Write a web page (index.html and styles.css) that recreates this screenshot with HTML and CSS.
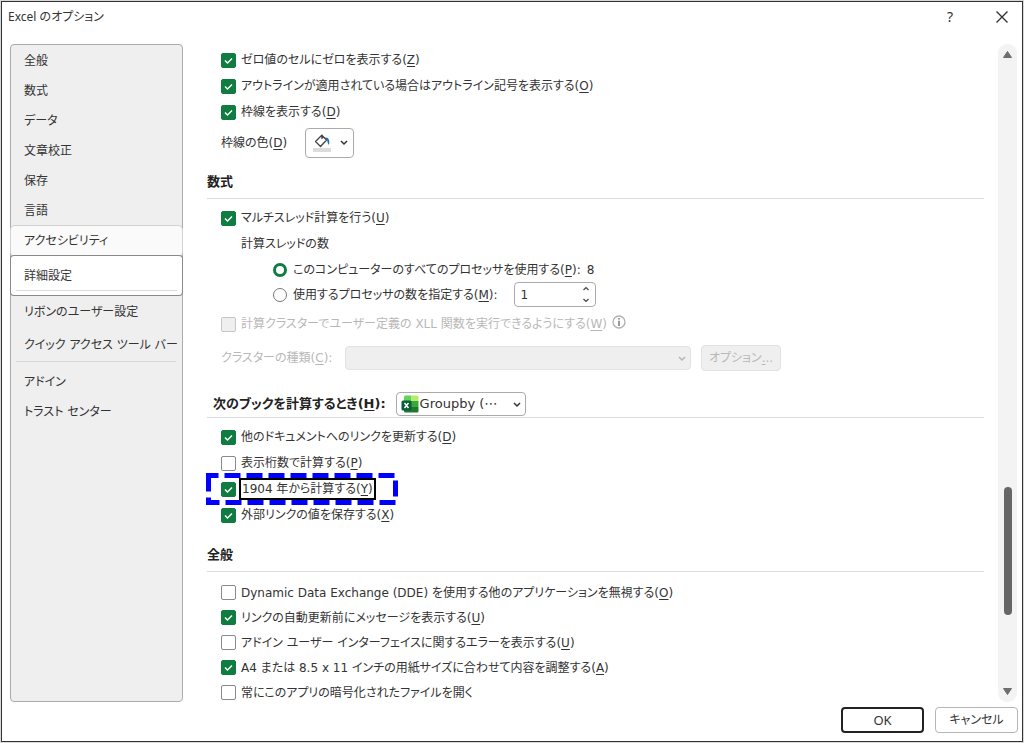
FILE: index.html
```html
<!DOCTYPE html>
<html lang="ja">
<head>
    <meta charset="UTF-8">
    <meta name="viewport" content="width=device-width, initial-scale=1.0">
    <title>Excel のオプション</title>
    <link rel="stylesheet" href="styles.css">
</head>
<body>
    <div class="dialog">
        <header class="titlebar">
            <h1>Excel のオプション</h1>
            <button type="button" class="title-btn" aria-label="ヘルプ">?</button>
            <button type="button" class="title-btn" aria-label="閉じる">
                <svg width="12" height="12" viewBox="0 0 12 12"><path d="M0.5 0.5L11.5 11.5M11.5 0.5L0.5 11.5" fill="none" stroke="#333" stroke-width="1.4"/></svg>
            </button>
        </header>

        <div class="main">
            <nav class="sidebar">
                <a href="#">全般</a>
                <a href="#">数式</a>
                <a href="#">データ</a>
                <a href="#">文章校正</a>
                <a href="#">保存</a>
                <a href="#">言語</a>
                <a href="#" class="hover">アクセシビリティ</a>
                <a href="#" class="selected">詳細設定</a>
                <a href="#" class="tall">リボンのユーザー設定</a>
                <a href="#" class="tall">クイック アクセス ツール バー</a>
                <hr>
                <a href="#">アドイン</a>
                <a href="#">トラスト センター</a>
            </nav>

            <div class="content">
                <section class="display">
                    <div class="row"><input type="checkbox" id="zero" checked><label for="zero">ゼロ値のセルにゼロを表示する(<u>Z</u>)</label></div>
                    <div class="row"><input type="checkbox" id="outline" checked><label for="outline">アウトラインが適用されている場合はアウトライン記号を表示する(<u>O</u>)</label></div>
                    <div class="row"><input type="checkbox" id="grid" checked><label for="grid">枠線を表示する(<u>D</u>)</label></div>
                    <div class="row color-row">
                        <label for="grid-color">枠線の色(<u>D</u>)</label>
                        <button type="button" id="grid-color" class="color-btn">
                            <svg width="20" height="20" viewBox="0 0 20 20">
                                <path d="M10 1.5V6M10 2L3.5 8.5L8.5 13.5L14.5 7L10 2.5" fill="none" stroke="#444" stroke-width="1.3" stroke-linejoin="round"/>
                                <path d="M13 4.5C16.5 4 18 7 17 12C16 11 15.5 9 15 7Z" fill="#1a6fc0"/>
                                <rect x="1" y="15" width="18" height="4" fill="#dcdcdc"/>
                            </svg>
                            <svg width="8" height="6" viewBox="0 0 8 6"><path d="M1 1L4 4L7 1" fill="none" stroke="#333" stroke-width="1.5"/></svg>
                        </button>
                    </div>
                </section>

                <section class="formula">
                    <h2>数式</h2>
                    <div class="row"><input type="checkbox" id="multi" checked><label for="multi">マルチスレッド計算を行う(<u>U</u>)</label></div>
                    <div class="row threads">計算スレッドの数</div>
                    <div class="row radio-row">
                        <input type="radio" name="cpu" id="cpu-all" checked>
                        <label for="cpu-all">このコンピューターのすべてのプロセッサを使用する(<u>P</u>):</label>
                        <span class="count">8</span>
                    </div>
                    <div class="row radio-row">
                        <input type="radio" name="cpu" id="cpu-some">
                        <label for="cpu-some">使用するプロセッサの数を指定する(<u>M</u>):</label>
                        <div class="spin">
                            <input type="text" value="1" aria-label="プロセッサの数">
                            <div class="spin-btns">
                                <button type="button" aria-label="増やす"><svg width="8" height="5" viewBox="0 0 8 5"><path d="M1.5 4L4 1.5L6.5 4" fill="none" stroke="#444" stroke-width="1.2"/></svg></button>
                                <button type="button" aria-label="減らす"><svg width="8" height="5" viewBox="0 0 8 5"><path d="M1.5 1L4 3.5L6.5 1" fill="none" stroke="#444" stroke-width="1.2"/></svg></button>
                            </div>
                        </div>
                    </div>
                    <div class="row disabled">
                        <input type="checkbox" id="xll" disabled>
                        <label for="xll">計算クラスターでユーザー定義の XLL 関数を実行できるようにする(<u>W</u>)</label>
                        <svg class="info" width="14" height="14" viewBox="0 0 14 14"><circle cx="7" cy="7" r="6" fill="none" stroke="#b0b0b0" stroke-width="1.3"/><path d="M7 3V4.6M7 5.8V11" stroke="#999" stroke-width="2"/></svg>
                    </div>
                    <div class="row cluster disabled">
                        <label for="cluster">クラスターの種類(<u>C</u>):</label>
                        <div class="drop">
                            <select id="cluster" disabled><option></option></select>
                            <svg class="chev" width="8" height="6" viewBox="0 0 8 6"><path d="M1 1L4 4L7 1" fill="none" stroke="#b5b5b5" stroke-width="1.5"/></svg>
                        </div>
                        <button type="button" disabled>オプション<u>.</u>..</button>
                    </div>
                </section>

                <section class="book">
                    <h2>
                        <label for="book">次のブックを計算するとき(<u>H</u>):</label>
                        <div class="drop">
                            <select id="book"><option>Groupby (⋯</option></select>
                            <svg class="xl" width="18" height="18" viewBox="0 0 18 18">
                                <path d="M3 2Q3 0.5 4.5 0.5H10V6H3Z" fill="#5fd45a"/>
                                <path d="M10 0.5H16Q17.5 0.5 17.5 2V6H10Z" fill="#b4ec6c"/>
                                <path d="M3 6H17.5V12H3Z" fill="#3aa83c"/>
                                <path d="M3 12H17.5V16Q17.5 17.5 16 17.5H4.5Q3 17.5 3 16Z" fill="#1d7a2d"/>
                                <rect x="0.5" y="5.5" width="10" height="10" rx="1.5" fill="#0b5c38"/>
                                <path d="M3.5 8L7.5 13M7.5 8L3.5 13" stroke="#fff" stroke-width="1.5"/>
                            </svg>
                            <svg class="chev" width="8" height="6" viewBox="0 0 8 6"><path d="M1 1L4 4L7 1" fill="none" stroke="#333" stroke-width="1.5"/></svg>
                        </div>
                    </h2>
                    <div class="row"><input type="checkbox" id="links" checked><label for="links">他のドキュメントへのリンクを更新する(<u>D</u>)</label></div>
                    <div class="row"><input type="checkbox" id="precision"><label for="precision">表示桁数で計算する(<u>P</u>)</label></div>
                    <div class="row marked">
                        <input type="checkbox" id="y1904" checked><label for="y1904" class="focus">1904 年から計算する(<u>Y</u>)</label>
                        <svg class="marker" width="192" height="32" viewBox="0 0 192 32"><rect x="2.5" y="2.5" width="187" height="27" fill="none" stroke="#0000ff" stroke-width="5" stroke-dasharray="16 6" stroke-dashoffset="6"/></svg>
                    </div>
                    <div class="row"><input type="checkbox" id="external" checked><label for="external">外部リンクの値を保存する(<u>X</u>)</label></div>
                </section>

                <section class="general">
                    <h2>全般</h2>
                    <div class="row"><input type="checkbox" id="dde"><label for="dde">Dynamic Data Exchange (DDE) を使用する他のアプリケーションを無視する(<u>O</u>)</label></div>
                    <div class="row"><input type="checkbox" id="ask" checked><label for="ask">リンクの自動更新前にメッセージを表示する(<u>U</u>)</label></div>
                    <div class="row"><input type="checkbox" id="addin"><label for="addin">アドイン ユーザー インターフェイスに関するエラーを表示する(<u>U</u>)</label></div>
                    <div class="row"><input type="checkbox" id="paper" checked><label for="paper">A4 または 8.5 x 11 インチの用紙サイズに合わせて内容を調整する(<u>A</u>)</label></div>
                    <div class="row"><input type="checkbox" id="encrypt"><label for="encrypt">常にこのアプリの暗号化されたファイルを開く</label></div>
                </section>
            </div>

            <div class="scrollbar">
                <svg width="11" height="9" viewBox="0 0 11 9"><path d="M5.5 1.5L9.5 7.5H1.5Z" fill="#6e6e6e" stroke="#6e6e6e" stroke-linejoin="round"/></svg>
                <div class="track"><div class="thumb"></div></div>
                <svg width="11" height="9" viewBox="0 0 11 9"><path d="M5.5 7.5L9.5 1.5H1.5Z" fill="#6e6e6e" stroke="#6e6e6e" stroke-linejoin="round"/></svg>
            </div>
        </div>

        <footer class="footer">
            <button type="button" class="ok">OK</button>
            <button type="button">キャンセル</button>
        </footer>
    </div>
</body>
</html>
```
FILE: styles.css
```css
* {
    box-sizing: border-box;
}

body {
    margin: 0;
    padding: 1px;
    background: #d8d8d8;
    color: #333;
    font-family: "DejaVu Sans", "Noto Sans CJK JP", sans-serif;
    font-size: 12px;
    line-height: 20px;
    font-feature-settings: "palt";
}

button, input, select {
    font: inherit;
    color: inherit;
    font-feature-settings: inherit;
    margin: 0;
}

u {
    text-underline-offset: 2px;
}

.dialog {
    display: flex;
    flex-direction: column;
    height: calc(100vh - 2px);
    background: #fff;
    border: 1px solid #333;
}

/* title bar */
.titlebar {
    display: flex;
    align-items: center;
    height: 30px;
    padding: 0 6px;
    margin-bottom: 12px;
}

.titlebar h1 {
    flex: 1;
    margin: 0;
    font-family: "Noto Sans", "Noto Sans CJK JP", sans-serif;
    font-size: 12px;
    font-weight: normal;
}

.title-btn {
    display: flex;
    justify-content: center;
    align-items: center;
    width: 28px;
    height: 28px;
    margin-left: 24px;
    padding: 0;
    border: none;
    background: none;
    font-family: "Noto Sans", sans-serif;
    font-size: 14px;
}

.main {
    display: flex;
    flex: 1;
    min-height: 0;
    padding: 0 5px 0 8px;
}

/* category list */
.sidebar {
    display: flex;
    flex-direction: column;
    flex-shrink: 0;
    width: 173px;
    padding-top: 1px;
    border: 1px solid #ababab;
    border-radius: 4px;
    background: #efefef;
}

.sidebar a {
    display: flex;
    align-items: center;
    height: 30px;
    padding-left: 13px;
    color: #333;
    text-decoration: none;
    white-space: nowrap;
}

.sidebar .hover {
    background: #fafafa;
    box-shadow: 0 0 0 1px #d2d2d2;
    border-radius: 4px;
}

.sidebar .selected {
    position: relative;
    height: 39px;
    background: #fff;
    box-shadow: 0 0 0 1px #8a8a8a;
    border-radius: 3px;
}

.sidebar .selected::after {
    content: "";
    position: absolute;
    left: 5px;
    right: 5px;
    bottom: 4px;
    border-bottom: 1px solid #dcdcdc;
}

.sidebar .tall {
    height: 33px;
}

.sidebar hr {
    width: 160px;
    margin: 0 5px 5px;
    border: none;
    border-top: 1px solid #d6d6d6;
}

/* settings */
.content {
    flex: 1;
    min-width: 0;
    overflow: hidden;
    padding: 3px 14px 0 24px;
}

h2 {
    display: flex;
    align-items: center;
    margin: 0 0 6px;
    padding-bottom: 6px;
    border-bottom: 1px solid #dcdcdc;
    font-size: 13px;
    font-weight: bold;
    color: #222;
}

.display {
    margin-bottom: 14px;
}

.formula {
    margin-bottom: 21px;
}

.book {
    margin-bottom: 17px;
}

.row {
    display: flex;
    align-items: center;
    gap: 5px;
    height: 26px;
    padding-left: 14px;
    white-space: nowrap;
}

.general .row {
    height: 25px;
}

input[type="checkbox"] {
    appearance: none;
    flex-shrink: 0;
    width: 15px;
    height: 15px;
    border: 1px solid #8a8a8a;
    border-radius: 2px;
    background: #fff;
}

input[type="checkbox"]:checked {
    border-color: #107c41;
    background: #107c41 url("data:image/svg+xml,%3Csvg xmlns='http://www.w3.org/2000/svg' viewBox='0 0 13 13'%3E%3Cpath d='M3 6.5L5.5 9L10 4.5' fill='none' stroke='white' stroke-width='1.4'/%3E%3C/svg%3E") center / 13px no-repeat;
}

input[type="checkbox"]:disabled {
    border-color: #c6c6c6;
    background: #efefef;
}

input[type="radio"] {
    appearance: none;
    flex-shrink: 0;
    width: 14px;
    height: 14px;
    border: 1px solid #777;
    border-radius: 50%;
    background: #fff;
}

input[type="radio"]:checked {
    border: 3px solid #107c41;
}

.color-row {
    gap: 18px;
    height: 30px;
    margin-top: 3px;
}

.color-btn {
    display: flex;
    justify-content: center;
    align-items: center;
    gap: 8px;
    width: 49px;
    height: 30px;
    padding: 0;
    border: 1px solid #ababab;
    border-radius: 4px;
    background: #fff;
}

.threads {
    padding-left: 34px;
}

.radio-row {
    gap: 6px;
    height: 25px;
    padding-left: 66px;
}

.spin {
    display: flex;
    width: 82px;
    height: 25px;
    margin-left: 10px;
    border: 1px solid #ababab;
    border-radius: 4px;
}

.spin input {
    flex: 1;
    min-width: 0;
    padding: 0 6px;
    border: none;
    background: none;
}

.spin-btns {
    display: flex;
    flex-direction: column;
    width: 18px;
}

.spin-btns button {
    display: flex;
    flex: 1;
    justify-content: center;
    align-items: center;
    padding: 0;
    border: none;
    background: none;
}

.disabled {
    margin-top: 4px;
    color: #b8b8b8;
}

.info {
    margin-bottom: 4px;
}

.cluster {
    gap: 10px;
    margin-top: 8px;
}

.cluster label {
    width: 114px;
}

.cluster .drop {
    width: 346px;
}

.cluster button {
    width: 80px;
    height: 26px;
    padding: 0;
    border: 1px solid #e2e2e2;
    border-radius: 4px;
    background: #efefef;
}

.drop {
    position: relative;
    width: 130px;
    height: 24px;
}

.drop select {
    appearance: none;
    display: block;
    width: 100%;
    height: 24px;
    padding: 0 20px 0 23px;
    border: 1px solid #ababab;
    border-radius: 4px;
    background: #fff;
}

.drop select:disabled {
    border-color: #e2e2e2;
    background: #efefef;
    opacity: 1;
}

.chev {
    position: absolute;
    right: 5px;
    top: 10px;
}

.xl {
    position: absolute;
    left: 5px;
    top: 3px;
}

.book h2 {
    gap: 10px;
    padding: 0 0 1px 6px;
}

.book .drop {
    font-weight: normal;
    color: #333;
}

.general h2 {
    margin-bottom: 8px;
}

.marked {
    position: relative;
    gap: 3px;
}

.focus {
    padding: 0 1px;
    border: 2px solid #000;
    line-height: 18px;
}

/* dashed callout round the 1904 option */
.marker {
    position: absolute;
    left: -1px;
    top: -3px;
}

/* scroll bar */
.scrollbar {
    display: flex;
    flex-direction: column;
    align-items: center;
    width: 19px;
    padding: 6px 0;
    border-radius: 9px;
    background: #f3f3f3;
}

.track {
    display: flex;
    flex: 1;
    flex-direction: column;
}

.track::before {
    content: "";
    flex: 428;
}

.track::after {
    content: "";
    flex: 72;
}

.thumb {
    flex: 128;
    width: 8px;
    border-radius: 4px;
    background: #666;
}

.footer {
    display: flex;
    justify-content: flex-end;
    gap: 11px;
    padding: 5px 4px 8px;
}

.footer button {
    width: 83px;
    height: 26px;
    padding: 0;
    border: 1px solid #b5b5b5;
    border-radius: 4px;
    background: #fff;
    font-family: "Noto Sans", "Noto Sans CJK JP", sans-serif;
    font-size: 12px;
}

.footer .ok {
    border: 2px solid #222;
    font-size: 13px;
}
```
